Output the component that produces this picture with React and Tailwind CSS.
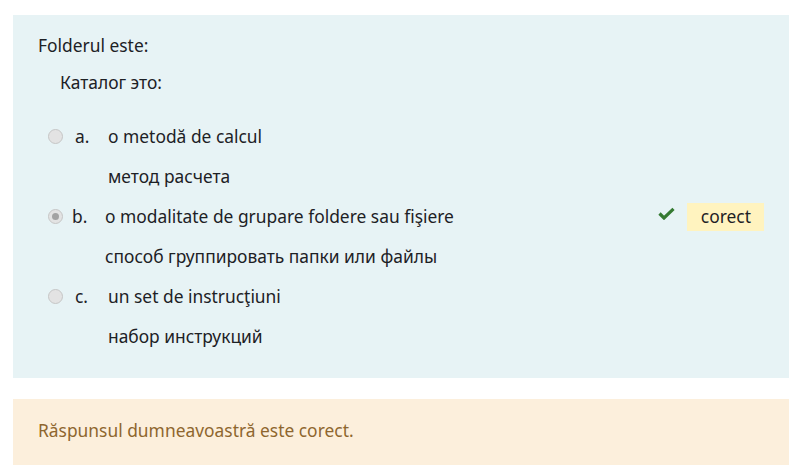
const options = [
  { letter: "a.", ro: "o metodă de calcul", ru: "метод расчета", shift: "ml-[12px]" },
  { letter: "b.", ro: "o modalitate de grupare foldere sau fişiere", ru: "способ группировать папки или файлы", checked: true, shift: "ml-[9px]" },
  { letter: "c.", ro: "un set de instrucţiuni", ru: "набор инструкций", shift: "ml-[12px]" },
]

function Radio({ checked }) {
  return (
    <span className="w-[15px] h-[15px] rounded-full border border-[#c6c6c6] bg-[#e3e3e3] flex items-center justify-center shrink-0">
      {checked && <span className="w-[7px] h-[7px] rounded-full bg-[#a3a3a3]"></span>}
    </span>
  )
}

export default function App() {
  return (
    <div className="bg-white w-[799px] h-[472px] pt-[15px] pl-[13px] pr-[10px] text-[#1d2125] text-[17.4px] font-['Noto_Sans',sans-serif]">
      <div className="bg-[#e7f3f5] h-[363px] pl-[25px] pr-[25px] pt-[18px]">
        <p className="leading-[24px]">Folderul este:</p>
        <p className="leading-[24px] mt-[13px] pl-[22px]">Каталог это:</p>
        <div className="mt-[23px] flex flex-col">
          {options.map((o) => (
            <div key={o.letter} className="flex flex-col">
              <div className="flex items-center h-[39px]">
                <span className="ml-[10px]"><Radio checked={o.checked} /></span>
                <span className={o.shift + " w-[33px]"}>{o.letter}</span>
                <span className="flex-1">{o.ro}</span>
                {o.checked && (
                  <span className="flex items-center">
                    <svg width="17" height="13" viewBox="0 0 17 13" className="mr-[12px] mb-[6px]">
                      <path d="M1.5 6.5 L6 11 L15.5 1.8" fill="none" stroke="#357a32" strokeWidth="3.2" />
                    </svg>
                    <span className="bg-[#fff3bf] pl-[14px] pr-[13px] h-[28px] flex items-center">corect</span>
                  </span>
                )}
              </div>
              <div className={"h-[41px] flex items-center " + (o.checked ? "pl-[67px]" : "pl-[70px]")}>{o.ru}</div>
            </div>
          ))}
        </div>
      </div>
      <div className="mt-[21px] bg-[#fcefdc] h-[66px] flex items-center pl-[25px] pb-[4px] text-[#8e662e]">
        Răspunsul dumneavoastră este corect.
      </div>
    </div>
  )
}
